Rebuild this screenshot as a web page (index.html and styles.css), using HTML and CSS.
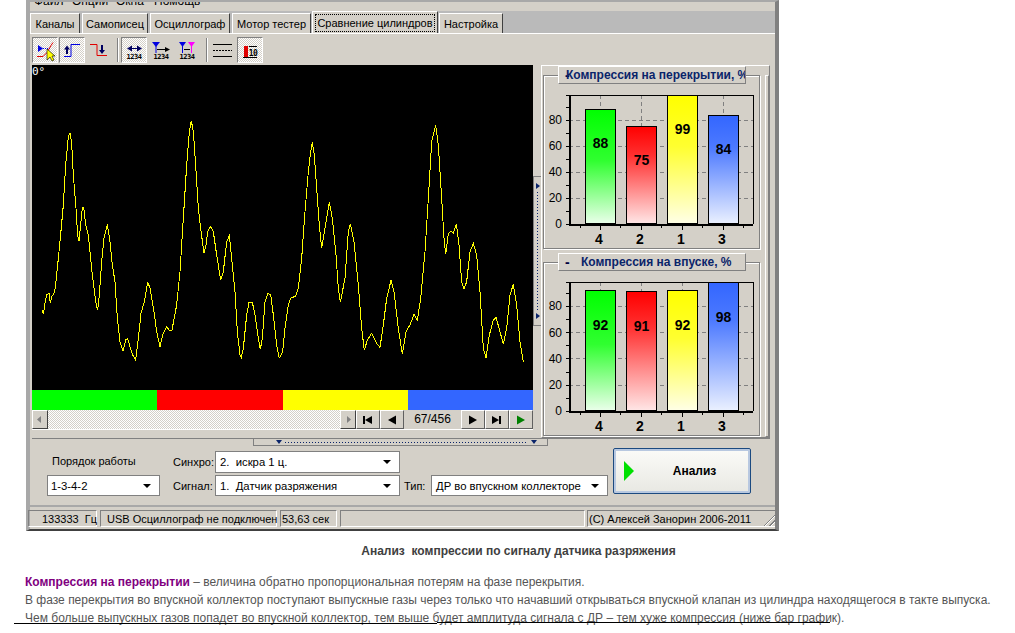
FILE: index.html
```html
<!DOCTYPE html>
<html lang="ru">
<head>
<meta charset="utf-8">
<title>Сравнение цилиндров</title>
<link rel="stylesheet" href="styles.css">
</head>
<body>
<svg width="0" height="0" class="defs">
  <defs>
    <linearGradient id="gg" x1="0" y1="0" x2="0" y2="1"><stop offset="0" stop-color="#00ff00"/><stop offset=".45" stop-color="#30ff30"/><stop offset="1" stop-color="#eaffea"/></linearGradient>
    <linearGradient id="gr" x1="0" y1="0" x2="0" y2="1"><stop offset="0" stop-color="#ff0000"/><stop offset=".3" stop-color="#ff3030"/><stop offset="1" stop-color="#ffe6e6"/></linearGradient>
    <linearGradient id="gy" x1="0" y1="0" x2="0" y2="1"><stop offset="0" stop-color="#ffff00"/><stop offset=".4" stop-color="#ffff30"/><stop offset="1" stop-color="#ffffe6"/></linearGradient>
    <linearGradient id="gb" x1="0" y1="0" x2="0" y2="1"><stop offset="0" stop-color="#3366ff"/><stop offset=".3" stop-color="#4d7aff"/><stop offset="1" stop-color="#eaf0ff"/></linearGradient>
  </defs>
</svg>
<div class="window">
  <div class="menu"><span class="m1">Файл</span><span class="m2">Опции</span><span class="m3">Окна</span><span class="m4">Помощь</span></div>
  <div class="tabs">
    <div class="tab w50">Каналы</div>
    <div class="tab w66">Самописец</div>
    <div class="tab w80">Осциллограф</div>
    <div class="tab w79">Мотор тестер</div>
    <div class="tab active"><span class="focus">Сравнение цилиндров</span></div>
    <div class="tab w64">Настройка</div>
  </div>
  <div class="panel">
    <div class="toolbar">
      <div class="tb pressed">
        <svg class="ico" viewBox="0 0 26 26"><path d="M6 8l5 3.500-5 3.500z" fill="#0000e0"/><path d="M11 11.500h7" stroke="#0000e0" stroke-dasharray="1 1"/><path d="M5 19.500h6l4-4 4-7 2-3" stroke="#e00000" fill="none"/><path d="M15 12v11l3-3 2 4 2-1-2-4h3z" fill="#ffff00" stroke="#000" stroke-width=".6"/></svg>
      </div>
      <div class="tb pressed">
        <svg class="ico" viewBox="0 0 26 26"><path d="M5 19.500h7v-12h9" stroke="#0000e0" fill="none"/><path d="M5 12.500l3-4 3 4zM7 12h2v5H7z" fill="#000060"/></svg>
      </div>
      <div class="tb">
        <svg class="ico" viewBox="0 0 26 26"><path d="M4 7.500h7v11h10" stroke="#e00000" fill="none"/><path d="M15 8h2v5h-2zM13 13h6l-3 4z" fill="#000060"/></svg>
      </div>
      <div class="sep"></div>
      <div class="tb pressed">
        <svg class="ico" viewBox="0 0 26 26"><path d="M7 11.500h12" stroke="#000060"/><path d="M6 11.500l5-3v6zM21 11.500l-5-3v6z" fill="#000060"/><text x="13" y="22" class="mini">1234</text></svg>
      </div>
      <div class="tb">
        <svg class="ico" viewBox="0 0 26 26"><path d="M4 5h8l-4 5z" fill="#0000e0"/><path d="M8 9v7" stroke="#0000e0"/><path d="M9 12.500h9" stroke="#000"/><path d="M17 10l5 2.500-5 2.500z"/><text x="13" y="22" class="mini">1234</text></svg>
      </div>
      <div class="tb">
        <svg class="ico" viewBox="0 0 26 26"><path d="M4 5h7l-3.500 5z" fill="#0000e0"/><path d="M7.500 9v7" stroke="#0000e0"/><path d="M13 5h7l-3.500 5z" fill="#ff00ff"/><path d="M16.500 9v7" stroke="#ff00ff"/><path d="M9 12.500h6" stroke="#000"/><text x="12" y="22" class="mini">1234</text></svg>
      </div>
      <div class="sep"></div>
      <div class="tb">
        <svg class="ico" viewBox="0 0 26 26"><path d="M3 7.500h19M3 19.500h19" stroke="#000"/><path d="M3 13.500h19" stroke="#000" stroke-dasharray="2 1"/></svg>
      </div>
      <div class="tb pressed">
        <svg class="ico" viewBox="0 0 26 26"><path d="M7 9h4v11H7z" fill="#e00000"/><path d="M6 20.500h14" stroke="#000"/><path d="M12 9.500h8" stroke="#000"/><text x="16" y="19" class="mini tens">10</text></svg>
      </div>
    </div>
    <div class="main">
      <div class="left">
        <div class="plot">
          <span class="deg">0°</span>
          <svg class="wave" viewBox="0 0 1503 975" preserveAspectRatio="none">
            <g transform="translate(-6 0)">
              <polyline class="trace" points="36,735 40,748 45,715 50,690 57,684 61,715 65,695 74,682 80,630 90,530 100,420 107,300 115,215 120,205 125,235 130,330 138,430 143,510 147,528 152,480 157,428 161,426 167,480 175,512 180,560 187,630 197,710 203,736 208,690 215,590 222,520 232,478 240,530 247,600 255,650 262,760 270,830 279,858 287,825 293,820 300,845 308,870 317,885 325,820 333,745 343,710 353,650 360,670 372,740 380,800 390,845 398,810 410,786 418,796 426,795 440,720 450,620 460,460 470,300 478,200 484,167 490,200 497,300 505,430 512,490 522,565 528,540 533,500 542,484 550,500 560,570 572,645 580,620 590,530 598,512 607,600 615,680 622,800 630,870 634,877 640,850 650,750 657,712 667,712 675,750 685,820 691,853 697,820 705,710 713,686 722,688 730,750 740,840 747,877 750,877"/>
            </g>
            <g transform="translate(744 0)">
              <polyline class="trace" points="0,877 8,860 15,790 25,720 32,700 47,693 55,670 65,580 75,440 85,320 92,260 97,232 103,270 110,370 118,480 125,550 135,490 148,412 157,460 168,570 175,670 181,712 195,640 205,500 211,476 222,530 235,660 245,790 253,856 262,825 275,805 290,835 300,847 310,780 320,700 333,646 342,680 355,790 367,868 378,800 390,780 402,748 412,765 422,700 435,560 445,400 455,230 467,180 475,240 485,400 492,520 497,568 505,505 513,498 520,505 529,476 537,540 545,650 552,673 560,650 570,560 580,535 590,570 600,680 610,850 618,878 628,810 640,765 648,757 660,800 670,838 680,790 690,690 700,658 710,720 720,830 730,892"/>
            </g>
          </svg>
        </div>
        <div class="strip"><i class="c-g"></i><i class="c-r"></i><i class="c-y"></i><i class="c-b"></i></div>
        <div class="nav">
          <div class="scroll">
            <div class="sbtn"><svg viewBox="0 0 14 17"><path d="M8 5v7L4 8.500z" fill="#808080"/></svg></div>
            <div class="track"></div>
            <div class="sbtn"><svg viewBox="0 0 14 17"><path d="M6 5v7l4-3.500z" fill="#808080"/></svg></div>
          </div>
          <div class="nbtn"><svg viewBox="0 0 22 17"><path d="M6 5h2v8H6zM8 9l7-4v8z" fill="#000"/></svg></div>
          <div class="nbtn"><svg viewBox="0 0 22 17"><path d="M7 9l8-4.500v9z" fill="#000"/></svg></div>
          <div class="count">67/456</div>
          <div class="nbtn"><svg viewBox="0 0 22 17"><path d="M7 4.500l8 4.500-8 4.500z" fill="#000"/></svg></div>
          <div class="nbtn"><svg viewBox="0 0 22 17"><path d="M6 5l7 4-7 4zM13 5h2v8h-2z" fill="#000"/></svg></div>
          <div class="nbtn"><svg viewBox="0 0 22 17"><path d="M7 4.500l8 4.500-8 4.500z" fill="#008000"/></svg></div>
        </div>
      </div>
      <div class="vsplit">
        <i class="arr-r"></i><span class="dots-v"></span><i class="arr-r"></i>
      </div>
      <div class="right">
        <div class="groups">
          <div class="group">
            <div class="gtitle clipped"><b>-</b><span>Компрессия на перекрытии, %</span></div>
            <svg class="chart" viewBox="543 75 217 174">
              <g class="grid">
                <path d="M569 120.500h184M569 146.500h184M569 172.500h184M569 198.500h184"/>
                <path d="M600.500 95v129M641.500 95v129M682.500 95v129M723.500 95v129"/>
              </g>
              <path class="ticks" d="M566 95.500h4M566 107.500h4M566 120.500h4M566 133.500h4M566 146.500h4M566 159.500h4M566 172.500h4M566 185.500h4M566 198.500h4M566 211.500h4M566 224.500h4M580.500 224v4M600.500 224v6M620.500 224v4M641.500 224v6M661.500 224v4M682.500 224v6M702.500 224v4M723.500 224v6M743.500 224v4"/>
              <rect class="bar" x="585.500" y="109.500" width="30" height="114" fill="url(#gg)"/>
              <rect class="bar" x="626.500" y="126.500" width="30" height="97" fill="url(#gr)"/>
              <rect class="bar" x="667.500" y="95.500" width="30" height="128" fill="url(#gy)"/>
              <rect class="bar" x="708.500" y="115.500" width="30" height="108" fill="url(#gb)"/>
              <path class="frame" d="M570 95.500h183.500V224"/>
              <path class="axis" d="M569.500 95v130M569 224.500h184"/>
              <text class="val" x="600.500" y="148">88</text><text class="val" x="641.500" y="165">75</text><text class="val" x="682.500" y="134">99</text><text class="val" x="723.500" y="154">84</text>
              <text class="yl" x="562" y="124">80</text><text class="yl" x="562" y="150">60</text><text class="yl" x="562" y="176">40</text><text class="yl" x="562" y="202">20</text><text class="yl" x="562" y="228">0</text>
              <text class="xl" x="599" y="244">4</text><text class="xl" x="640" y="244">2</text><text class="xl" x="681" y="244">1</text><text class="xl" x="722" y="244">3</text>
            </svg>
          </div>
          <div class="group">
            <div class="gtitle"><b>-</b><span>Компрессия на впуске, %</span></div>
            <svg class="chart" viewBox="543 262 217 174">
              <g class="grid">
                <path d="M569 306.500h184M569 332.500h184M569 358.500h184M569 385.500h184"/>
                <path d="M600.500 282v129M641.500 282v129M682.500 282v129M723.500 282v129"/>
              </g>
              <path class="ticks" d="M566 282.500h4M566 293.500h4M566 306.500h4M566 319.500h4M566 332.500h4M566 345.500h4M566 358.500h4M566 372.500h4M566 385.500h4M566 398.500h4M566 411.500h4M580.500 411v4M600.500 411v6M620.500 411v4M641.500 411v6M661.500 411v4M682.500 411v6M702.500 411v4M723.500 411v6M743.500 411v4"/>
              <rect class="bar" x="585.500" y="290.500" width="30" height="120" fill="url(#gg)"/>
              <rect class="bar" x="626.500" y="291.500" width="30" height="119" fill="url(#gr)"/>
              <rect class="bar" x="667.500" y="290.500" width="30" height="120" fill="url(#gy)"/>
              <rect class="bar" x="708.500" y="282.500" width="30" height="128" fill="url(#gb)"/>
              <path class="frame" d="M570 282.500h183.500V411"/>
              <path class="axis" d="M569.500 282v130M569 411.500h184"/>
              <text class="val" x="600.500" y="330">92</text><text class="val" x="641.500" y="331">91</text><text class="val" x="682.500" y="330">92</text><text class="val" x="723.500" y="322">98</text>
              <text class="yl" x="562" y="310">80</text><text class="yl" x="562" y="337">60</text><text class="yl" x="562" y="363">40</text><text class="yl" x="562" y="389">20</text><text class="yl" x="562" y="415">0</text>
              <text class="xl" x="599" y="431">4</text><text class="xl" x="640" y="431">2</text><text class="xl" x="681" y="431">1</text><text class="xl" x="722" y="431">3</text>
            </svg>
          </div>
        </div>
        <div class="rbar"></div>
      </div>
    </div>
    <div class="hsplit"><div class="hs"><i class="arr-d"></i><span class="dots-h"></span><i class="arr-d"></i></div></div>
    <div class="controls">
      <div class="col1">
        <div class="lbl order">Порядок работы</div>
        <div class="combo c113"><span>1-3-4-2</span><i class="arr-k"></i></div>
      </div>
      <div class="col2">
        <div class="crow"><div class="lbl l42">Синхро:</div><div class="combo c185"><span>2.&nbsp; искра 1 ц.</span><i class="arr-k"></i></div></div>
        <div class="crow">
          <div class="lbl l42">Сигнал:</div><div class="combo c185"><span>1.&nbsp; Датчик разряжения</span><i class="arr-k"></i></div>
          <div class="lbl l27">Тип:</div><div class="combo c177"><span>ДР во впускном коллекторе</span><i class="arr-k"></i></div>
        </div>
      </div>
      <div class="go"><i class="play"></i><b>Анализ</b></div>
    </div>
  </div>
  <div class="status">
    <div class="cell s1">133333&nbsp; Гц</div>
    <div class="cell s2">USB Осциллограф не подключен</div>
    <div class="cell s3">53,63 сек</div>
    <div class="cell s4"></div>
    <div class="cell s5">(C) Алексей Занорин 2006-2011<i class="grip"></i></div>
  </div>
</div>
<h1 class="head">Анализ&nbsp; компрессии по сигналу датчика разряжения</h1>
<div class="para">
  <p><b>Компрессия на перекрытии</b> – величина обратно пропорциональная потерям на фазе перекрытия.</p>
  <p>В фазе перекрытия во впускной коллектор поступают выпускные газы через только что начавший открываться впускной клапан из цилиндра находящегося в такте выпуска.</p>
  <p>Чем больше выпускных газов попадет во впускной коллектор, тем выше будет амплитуда сигнала с ДР – тем хуже компрессия (ниже бар график).</p>
  <div class="rule a"></div><div class="rule b"></div>
</div>
</body>
</html>
```
FILE: styles.css
```css
* { box-sizing: border-box; }
html, body { margin: 0; padding: 0; background: #fff; }
body { height: 633px; overflow: hidden; font-family: "Liberation Sans", Arial, sans-serif; font-size: 11px; color: #000; }
.defs { position: absolute; }
svg { display: block; }

.window { width: 753px; height: 531px; margin-left: 26px; background: #d4d0c8; border: solid #a8a8a8; border-width: 2px 4px 2px 4px; border-bottom-color: #404040; border-right-color: #808080; }
.menu { height: 9px; overflow: hidden; display: flex; font-size: 12px; }
.menu span { display: block; margin-top: -7px; line-height: 13px; }
.m1 { margin-left: 4px; width: 38px; }
.m2 { width: 44px; }
.m3 { width: 38px; }

.tabs { height: 22px; background: #bababa; display: flex; align-items: flex-end; gap: 2px; }
.tab { height: 20px; background: #d4d0c8; border: 1px solid; border-color: #fff #404040 #d4d0c8 #fff; border-bottom: 0; text-align: center; line-height: 20px; font-size: 11px; }
.w50 { width: 50px; } .w66 { width: 66px; } .w80 { width: 80px; } .w79 { width: 79px; margin-right: -1px; } .w64 { width: 64px; margin-left: -1px; }
.tab.active { width: 126px; height: 22px; line-height: 17px; padding: 2px 2px 0; }
.focus { display: block; border: 1px dotted #000; height: 18px; white-space: nowrap; }

.panel { height: 474px; border-top: 1px solid #fff; border-bottom: 2px solid #a8a8a8; padding: 2px 5px 0 2px; }
.toolbar { display: flex; height: 27px; margin-bottom: 2px; padding-top: 1px; }
.tb { width: 26px; height: 26px; flex: none; margin-right: 1px; }
.tb.pressed { border: 1px solid; border-color: #808080 #fff #fff #808080; background: url("data:image/svg+xml,<svg xmlns='http://www.w3.org/2000/svg' width='2' height='2'><rect width='2' height='2' fill='%23fff'/><rect width='1' height='1' fill='%23d4d0c8'/><rect x='1' y='1' width='1' height='1' fill='%23d4d0c8'/></svg>"); }
.ico { width: 26px; height: 26px; overflow: visible; }
.tb.pressed .ico { margin: -1px; }
.mini { font: bold 7px "DejaVu Sans Mono", monospace; text-anchor: middle; letter-spacing: -.5px; }
.tens { font-size: 8px; }
.sep { width: 2px; height: 24px; background: #808080; border-right: 1px solid #fff; margin: 1px 2px 0 4px; flex: none; }

.main { display: flex; height: 373px; }
.left { width: 501px; flex: none; }
.plot { height: 325px; background: #000; position: relative; }
.deg { position: absolute; left: 0; top: 1px; color: #fff; font-size: 11px; line-height: 11px; font-family: "DejaVu Sans Mono", monospace; }
.wave { width: 501px; height: 325px; }
.trace { fill: none; stroke: #ffff00; stroke-width: 3; shape-rendering: crispEdges; }
.strip { display: flex; height: 20px; }
.strip i { flex: 1; }
.c-g { background: #00ff00; } .c-r { background: #ff0000; } .c-y { background: #ffff00; } .c-b { background: #3366ff; }
.nav { height: 20px; display: flex; border-bottom: 1px solid #fff; }
.scroll { width: 324px; flex: none; display: flex; }
.sbtn { width: 16px; height: 19px; background: #d4d0c8; border: 1px solid; border-color: #fff #404040 #404040 #fff; flex: none; }
.sbtn svg { width: 14px; height: 17px; }
.track { flex: 1; background: url("data:image/svg+xml,<svg xmlns='http://www.w3.org/2000/svg' width='2' height='2'><rect width='2' height='2' fill='%23fff'/><rect width='1' height='1' fill='%23d4d0c8'/><rect x='1' y='1' width='1' height='1' fill='%23d4d0c8'/></svg>"); }
.nbtn { width: 24px; height: 19px; background: #d4d0c8; border: 1px solid; border-color: #fff #606060 #606060 #fff; flex: none; }
.nbtn svg { width: 22px; height: 17px; }
.count { width: 57px; text-align: center; line-height: 19px; font-size: 12px; flex: none; }

.vsplit { width: 8px; flex: none; height: 150px; margin-top: 111px; border: 1px solid #808080; border-right: 0; display: flex; flex-direction: column; align-items: center; padding: 6px 0; }
.arr-r { width: 0; height: 0; border-left: 4px solid #0a246a; border-top: 3px solid transparent; border-bottom: 3px solid transparent; }
.dots-v { flex: 1; width: 1px; margin: 3px 0; background: repeating-linear-gradient(#0a246a 0 1px, transparent 1px 3px); }

.right { flex: 1; display: flex; border: 1px solid; border-color: #fff #808080 #808080 #fff; padding: 9px 0 0 1px; }
.groups { width: 217px; flex: none; display: flex; flex-direction: column; gap: 13px; }
.group { height: 174px; position: relative; border: 1px solid #808080; box-shadow: inset 1px 1px 0 #fff, 1px 1px 0 #fff; }
.chart { position: absolute; left: -1px; top: -1px; width: 217px; height: 174px; }
.gtitle { position: absolute; z-index: 1; left: 14px; top: -10px; width: 188px; height: 18px; background: #d4d0c8; border: 1px solid; border-color: #fff #808080 #808080 #fff; display: flex; align-items: center; overflow: hidden; color: #0a246a; font-weight: bold; font-size: 12px; white-space: nowrap; }
.gtitle b { font-size: 14px; color: #000040; margin-left: 6px; width: 16px; flex: none; }
.clipped b { margin-right: -15px; }
.rbar { width: 4px; margin: 0 0 0 5px; border: 1px solid; border-color: #fff #808080 #808080 #fff; }
.grid path { stroke: #808080; stroke-dasharray: 4 3; fill: none; shape-rendering: crispEdges; }
.ticks { stroke: #000; fill: none; shape-rendering: crispEdges; }
.bar { stroke: #000; shape-rendering: crispEdges; }
.frame { stroke: #000; fill: none; shape-rendering: crispEdges; }
.axis { stroke: #000; stroke-width: 2; fill: none; shape-rendering: crispEdges; }
.val { font: bold 14px "Liberation Sans", sans-serif; text-anchor: middle; }
.yl { font: 12px "Liberation Sans", sans-serif; text-anchor: end; }
.xl { font: bold 14px "Liberation Sans", sans-serif; text-anchor: middle; }

.hsplit { height: 8px; border-top: 1px solid #808080; padding-left: 221px; }
.hs { width: 295px; height: 7px; border: 1px solid #808080; border-top: 0; display: flex; align-items: center; padding: 0 10px 0 22px; }
.arr-d { width: 0; height: 0; border-top: 4px solid #0a246a; border-left: 3px solid transparent; border-right: 3px solid transparent; flex: none; }
.dots-h { flex: 1; height: 1px; margin: 0 3px; background: repeating-linear-gradient(90deg, #0a246a 0 1px, transparent 1px 3px); }

.controls { display: flex; align-items: flex-start; padding: 2px 0 0 15px; }
.col1 { width: 113px; margin: 6px 13px 0 0; flex: none; }
.lbl { font-size: 11px; line-height: 14px; white-space: nowrap; }
.order { padding-left: 5px; margin-bottom: 7px; }
.col2 { margin-top: 3px; display: flex; flex-direction: column; gap: 2px; width: 440px; flex: none; }
.crow { display: flex; align-items: center; }
.l42 { width: 42px; flex: none; }
.l27 { width: 27px; flex: none; margin-left: 4px; }
.combo { height: 22px; background: #fff; border: 1px solid #808080; display: flex; align-items: center; justify-content: space-between; padding: 0 8px 0 3px; font-size: 11.3px; flex: none; }
.crow + .crow .combo { height: 21px; }
.col1 .combo { height: 21px; }
.c113 { width: 113px; } .c185 { width: 185px; padding-left: 4px; } .c177 { width: 177px; padding-left: 4px; }
.arr-k { width: 0; height: 0; border-top: 4px solid #000; border-left: 4px solid transparent; border-right: 4px solid transparent; }
.go { width: 138px; height: 46px; flex: none; display: flex; align-items: center; border: 1px solid #1c4a80; box-shadow: inset 0 0 0 2px #b8c8e0; border-radius: 2px; background: linear-gradient(#fbfbf8, #e8e8e2); padding-left: 10px; }
.go b { flex: 1; text-align: center; font-size: 12px; padding-left: 5px; }
.play { width: 0; height: 0; border-left: 10px solid #00e000; border-top: 10px solid transparent; border-bottom: 10px solid transparent; }

.status { display: flex; gap: 3px; height: 20px; padding-top: 3px; font-size: 11px; }
.cell { height: 17px; border: 1px solid; border-color: #808080 #fff #fff #808080; line-height: 16px; white-space: nowrap; position: relative; padding-left: 1px; }
.s1 { width: 69px; margin-left: -2px; padding-left: 13px; }
.s2 { width: 177px; padding-left: 6px; }
.s3 { width: 57px; }
.s4 { width: 245px; margin-right: -1px; }
.s5 { width: 188px; flex: none; border-right: 0; }
.grip { position: absolute; right: 0; bottom: 0; width: 13px; height: 13px; background: repeating-linear-gradient(135deg, transparent 0 2px, #808080 2px 3px, #fff 3px 4px); clip-path: polygon(100% 0, 100% 100%, 0 100%); }

.head { margin: 13px 0 0 22px; width: 993px; text-align: center; font-size: 12px; line-height: 14px; color: #404040; font-weight: bold; }
.para { margin: 15px 0 0 25px; position: relative; font-size: 12px; line-height: 18px; color: #555; }
.para p { margin: 0; white-space: nowrap; }
.para b { color: #800080; }
.rule { position: absolute; height: 1px; background: #000; }
.rule.a { left: -11px; width: 423px; top: 50px; }
.rule.b { left: 412px; width: 393px; top: 49px; }
```
